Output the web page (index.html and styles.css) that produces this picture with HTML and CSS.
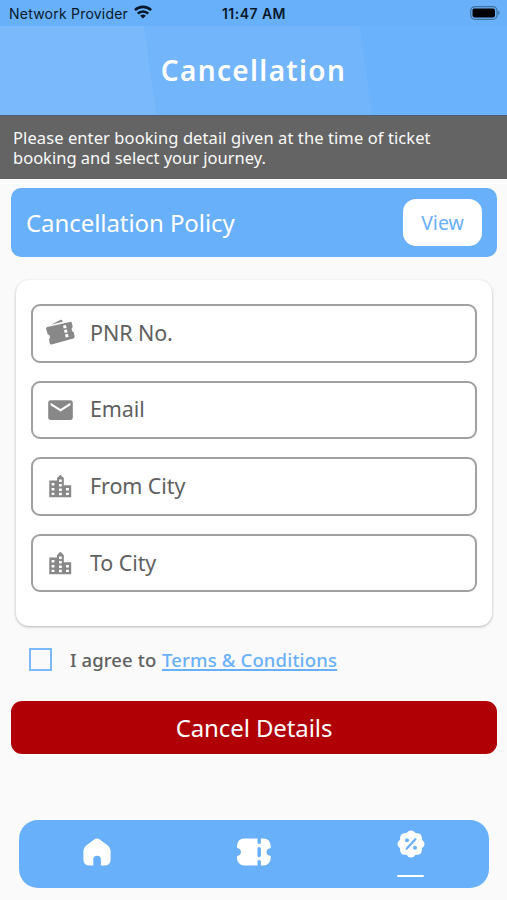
FILE: index.html
```
<!DOCTYPE html>
<html lang="en">
<head>
<meta charset="utf-8">
<title>Cancellation</title>
<link rel="stylesheet" href="styles.css">
</head>
<body>
<div class="status">
  <span class="carrier">Network Provider</span>
  <svg class="wifi" width="18" height="14" viewBox="0 0 18 14"><g fill="none" stroke="#06182b" stroke-width="2.6"><path d="M.9 5.2a11.5 11.5 0 0 1 16.2 0"/><path d="M3.8 8.6a7.4 7.4 0 0 1 10.4 0"/></g><path d="M9 13.6 6.1 10.8a4.2 4.2 0 0 1 5.8 0z" fill="#06182b"/></svg>
  <span class="clock">11:47 AM</span>
  <svg class="battery" width="30" height="14" viewBox="0 0 30 14"><rect x=".7" y=".7" width="26.3" height="12.6" rx="4" fill="none" stroke="#3f719f" stroke-width="1.2"/><rect x="2.5" y="2.6" width="22.5" height="8.8" rx="1.8"/><path d="M28.2 4.8c1.8.6 1.8 3.8 0 4.4z" fill="#3f719f"/></svg>
</div>
<header class="header"><h1>Cancellation</h1></header>
<p class="notice"><span class="line-one">Please enter booking detail given at the time of ticket</span> <span class="line-two">booking and select your journey.</span></p>
<main>
  <section class="policy"><h2>Cancellation Policy</h2><button class="view">View</button></section>
  <form class="card">
    <label class="field"><svg width="30" height="28" viewBox="0 0 30 28"><path d="M6 5.8 15.3.9c1-.6 1.6-.1 2.2 1.1l.2.8z"/><path d="M2.2 8 24.8 2.9q1.7-.4 2.1 1.2l.8 4a3.1 3.1 0 0 0 1.2 5.3l.7 4.2q.3 1.4-1.2 1.8L6.6 25.4q-1.5.4-1.9-1.1l-.8-3.8a3.1 3.1 0 0 0-1.2-5.3L1.1 10.1Q.7 8.4 2.2 8z"/><path d="m18 6.7.7 2.9 2.9-.7-.7-2.9zm1 4.4.7 2.9 2.9-.7-.7-2.9zm1 4.4.7 2.9 2.9-.7-.7-2.9z" fill="#fff"/></svg><span class="pnr">PNR No.</span></label>
    <label class="field"><svg width="30" height="28" viewBox="0 0 30 28"><path d="M5 4.3h20.4q2.4 0 2.4 2.4v15q0 2.4-2.4 2.4H5.6q-2.4 0-2.4-2.4v-15q0-2.4 2.4-2.4zM5.6 6.8v2.5l9.9 6.2 9.9-6.2V6.8l-9.9 6.1z" fill-rule="evenodd"/></svg><span class="email">Email</span></label>
    <label class="field"><svg width="30" height="28" viewBox="0 0 30 28"><use href="#city"/></svg><span class="from">From City</span></label>
    <label class="field"><svg width="30" height="28" viewBox="0 0 30 28"><use href="#city"/></svg><span class="to">To City</span></label>
  </form>
  <div class="agree"><span class="check"></span><span class="agree-text">I agree to</span><a class="terms">Terms &amp; Conditions</a></div>
  <button class="submit"><span>Cancel Details</span></button>
</main>
<nav class="tabs">
  <span class="tab"><svg width="28" height="28" viewBox="0 0 28 28"><path d="M11.2 1.4q2.8-2 5.6 0l8.3 6.3Q27.6 9.8 27.6 13v8.2q0 6.4-6.4 6.4h-3.3v-6q0-3.8-3.8-3.8t-3.8 3.8v6H6.8q-6.4 0-6.4-6.4V13q0-3.2 2.5-5.3z"/></svg></span>
  <span class="tab"><svg width="36" height="28" viewBox="0 0 36 28"><path d="M8.5.5h13v4q0 1.5 1.7 1.5t1.7-1.5v-4h2.3q7.3 0 7.6 8.2.1 1.6-1.2 1.7-3.1.6-3.1 3.6t3.1 3.6q1.3.1 1.2 1.7-.3 8.2-7.6 8.2h-2.3v-4q0-1.5-1.7-1.5t-1.7 1.5v4h-13q-7.3 0-7.6-8.2 0-1.3 1-1.5 3-.6 3-3.8T2 10.2q-1.1-.2-1.1-1.5Q1.2.5 8.5.5z"/><path d="M23.2 10.8v6.6" stroke="#69b0fb" stroke-width="3.5" stroke-linecap="round"/></svg></span>
  <span class="tab active"><svg width="28" height="28" viewBox="0 0 28 28"><circle cx="14" cy="14" r="11.9"/><g><circle cx="14" cy="4.9" r="4.4"/><circle cx="20.4" cy="7.6" r="4.4"/><circle cx="23.1" cy="14" r="4.4"/><circle cx="20.4" cy="20.4" r="4.4"/><circle cx="14" cy="23.1" r="4.4"/><circle cx="7.6" cy="20.4" r="4.4"/><circle cx="4.9" cy="14" r="4.4"/><circle cx="7.6" cy="7.6" r="4.4"/></g><path d="m9.6 18.8 8.8-9.6" stroke="#69b0fb" stroke-width="2.2" stroke-linecap="round"/><circle cx="10" cy="10.3" r="2" fill="#69b0fb"/><circle cx="18" cy="17.7" r="2" fill="#69b0fb"/></svg><i></i></span>
</nav>
<svg class="defs" width="0" height="0"><defs><path id="city" fill-rule="evenodd" d="M4.3 8.4H12V6L15.3 2.7 18.8 6v7.3h7.4v12h-22zM6.6 11v2.6h2.8V11zm0 4.9v2.6h2.8v-2.6zm0 4.8v2.4h2.8v-2.4zM14 7.6v2.5h2.8V7.6zm0 4.5v2.5h2.8v-2.5zm0 4.4V19h2.8v-2.5zm0 4.3v2.4h2.8v-2.4zM21 15.9v2.6h2.9v-2.6zm0 4.8v2.4h2.9v-2.4z"/></defs></svg>
</body>
</html>
```
FILE: styles.css
```
* { box-sizing: border-box; }
body { margin: 0; width: 507px; height: 900px; overflow: hidden; background: #fafafa; font-family: "Noto Sans", sans-serif; color: #606060; display: flex; flex-direction: column; }
h1, h2, p { margin: 0; font-weight: 400; }
button { border: 0; font-family: inherit; padding: 0; }
span, a { white-space: nowrap; }
.status { height: 26px; flex: none; background: #69b0fb; display: flex; align-items: center; padding: 1px 7px 0 9px; font: 14px/20px Inter, sans-serif; color: #06182b; }
.carrier { width: 119px; letter-spacing: .22px; }
.wifi { margin-left: 6px; margin-top: -3px; }
.clock { margin-left: 70px; font-weight: 600; letter-spacing: .45px; }
.battery { margin-left: auto; margin-top: -2px; }
.header { height: 89px; flex: none; background: linear-gradient(82deg, #7ab9fc 0 30%, #72b5fb 30.2% 71.5%, #6bb2fc 71.7%); display: flex; justify-content: center; align-items: center; padding-bottom: 2px; }
h1 { color: #fff; font-size: 28px; font-weight: 600; letter-spacing: 1.35px; line-height: 40px; }
.notice { height: 64px; flex: none; background: #646464; border-top: 1px solid #4b6078; color: #fafafa; font-size: 16.5px; line-height: 19.5px; padding: 12px 13px 0; }
.notice span { display: block; height: 19.5px; }
.line-one { letter-spacing: .09px; }
main { padding: 9px 10px 0 11px; }
.policy { height: 69px; background: #69b0fb; border-radius: 10px; display: flex; align-items: center; justify-content: space-between; padding: 0 15px; }
h2 { color: #fff; font-size: 24px; line-height: 34px; letter-spacing: -.07px; }
.view { width: 79px; height: 47px; border-radius: 13px; background: #fff; color: #69b0fb; font-size: 19.5px; }
.card { margin: 23px 5px 0; height: 346px; border-radius: 13px; background: #fff; box-shadow: 0 1px 3px rgba(0,0,0,.28); padding: 24px 15px; display: flex; flex-direction: column; gap: 18px; }
.field { height: 58.6px; border: 2px solid #a0a0a0; border-radius: 9px; display: flex; align-items: center; padding-left: 12px; font-size: 21.5px; line-height: 30px; }
.field svg { fill: #888; flex: none; margin-right: 15px; }
.field span { margin-top: -1px; letter-spacing: -.1px; }
.agree { display: flex; align-items: center; height: 30px; margin: 18px 0 0 18px; font-size: 18.5px; font-weight: 500; }
.check { width: 23px; height: 23px; border: 2.5px solid #7ab9fc; margin-right: 18px; }
.agree-text { width: 92px; letter-spacing: .1px; }
.terms { color: #69b0fb; letter-spacing: .15px; text-decoration: underline; text-decoration-thickness: 2px; text-underline-offset: 2px; }
.submit { display: block; width: 100%; height: 53px; border-radius: 11px; background: #b00005; color: #fff; font-size: 24px; margin-top: 27px; letter-spacing: -.1px; }
.tabs { flex: none; margin: 66px 18px 0 19px; height: 68px; border-radius: 19px; background: #69b0fb; display: grid; grid-template-columns: repeat(3, 1fr); }
.tab { display: flex; flex-direction: column; align-items: center; padding-top: 18px; }
.tab svg { fill: #fff; }
.active { padding-top: 10px; }
.active i { width: 27px; height: 2.5px; background: #fff; border-radius: 1px; margin-top: 16.5px; }
.defs { display: block; flex: none; }
```
